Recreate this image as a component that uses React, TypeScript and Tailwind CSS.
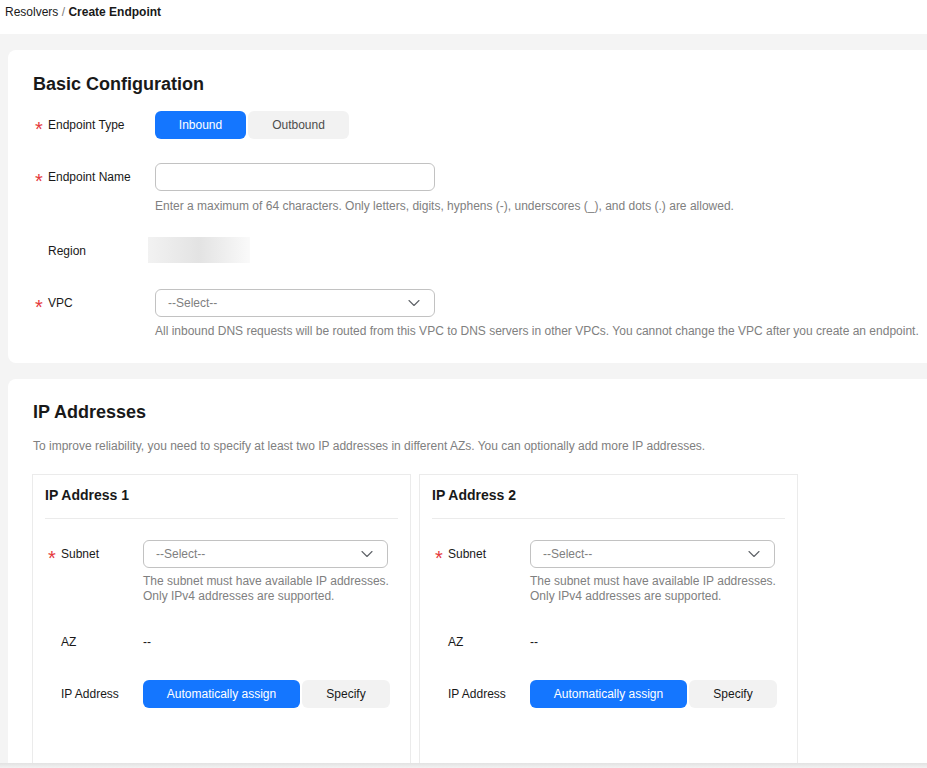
import React from "react";

const Chevron = () => (
  <svg width="12" height="8" viewBox="0 0 12 8" fill="none">
    <path d="M1 1.5l5 5 5-5" stroke="#5f6368" strokeWidth="1.1" strokeLinecap="round" strokeLinejoin="round" />
  </svg>
);

const Star = () => (
  <span className="text-[#e5393d] text-[20px] leading-none inline-block translate-y-[4px]">*</span>
);

const Select = ({ w }: { w: string }) => (
  <div className={`${w} h-[28px] border border-[#c2c2c2] rounded-[6px] flex items-center justify-between pl-[12px] pr-[14px] text-[12px] text-[#808080]`}>
    <span>--Select--</span>
    <Chevron />
  </div>
);

function IpCard({ n }: { n: number }) {
  return (
    <div className="w-[379px] h-[289px] border border-[#ebebeb] border-b-0 px-[12px]">
      <div className="h-[44px] flex items-center pb-[3px] text-[14px] font-bold text-[#191919] border-b border-[#ebebeb]">
        IP Address {n}
      </div>
      <div className="pl-[3px]">
        <div className="flex mt-[21px]">
          <div className="w-[95px] h-[28px] flex items-center text-[12px] text-[#191919]">
            <span className="w-[13px] flex"><Star /></span>Subnet
          </div>
          <div>
            <Select w="w-[245px]" />
            <div className="mt-[6px] text-[12px] leading-[15px] text-[#808080]">
              The subnet must have available IP addresses.
              <br />
              Only IPv4 addresses are supported.
            </div>
          </div>
        </div>
        <div className="flex mt-[24px] h-[28px] items-center text-[12px] text-[#191919]">
          <div className="w-[95px] pl-[13px]">AZ</div>
          <div>--</div>
        </div>
        <div className="flex mt-[24px] h-[28px] items-center text-[12px] text-[#191919]">
          <div className="w-[95px] pl-[13px]">IP Address</div>
          <div className="flex gap-[2px]">
            <div className="w-[157px] h-[28px] rounded-[6px] bg-[#1476ff] text-white flex items-center justify-center">Automatically assign</div>
            <div className="w-[88px] h-[28px] rounded-[6px] bg-[#f2f2f2] text-[#191919] flex items-center justify-center">Specify</div>
          </div>
        </div>
      </div>
    </div>
  );
}

export default function App() {
  return (
    <div className="w-[927px] h-[768px] overflow-hidden bg-white text-[#191919]" style={{ fontFamily: '"Liberation Sans", Arial, sans-serif' }}>
      <div className="h-[34px] pl-[5px] pt-[4px] text-[12px] leading-[16px]">
        <span className="text-[#191919]">Resolvers</span>
        <span className="text-[#808080]"> / </span>
        <span className="font-bold text-[#191919]">Create Endpoint</span>
      </div>
      <div className="bg-[#f4f4f4] pt-[16px] pl-[8px] h-[734px] flex flex-col">
        <div className="w-[940px] h-[313px] bg-white rounded-[8px] pl-[24px] pt-[22px]">
          <div className="text-[18px] leading-[24px] font-bold pl-[1px]">Basic Configuration</div>
          <div className="flex mt-[15px]">
            <div className="w-[123px] h-[28px] flex items-center text-[12px]">
              <span className="w-[16px] pl-[3px] flex"><Star /></span>Endpoint Type
            </div>
            <div className="flex gap-[2px] text-[12px]">
              <div className="w-[91px] h-[28px] rounded-[6px] bg-[#1476ff] text-white flex items-center justify-center">Inbound</div>
              <div className="w-[101px] h-[28px] rounded-[6px] bg-[#f2f2f2] text-[#4d4d4d] flex items-center justify-center">Outbound</div>
            </div>
          </div>
          <div className="flex mt-[24px]">
            <div className="w-[123px] h-[28px] flex items-center text-[12px]">
              <span className="w-[16px] pl-[3px] flex"><Star /></span>Endpoint Name
            </div>
            <div>
              <div className="w-[280px] h-[28px] border border-[#c2c2c2] rounded-[6px]" />
              <div className="mt-[7px] text-[12px] leading-[16px] text-[#808080]">
                Enter a maximum of 64 characters. Only letters, digits, hyphens (-), underscores (_), and dots (.) are allowed.
              </div>
            </div>
          </div>
          <div className="flex mt-[23px] items-center">
            <div className="w-[116px] h-[26px] flex items-center text-[12px] pl-[16px] pt-[2px]">Region</div>
            <div className="w-[102px] h-[26px] overflow-hidden">
              <div className="w-full h-full bg-gradient-to-r from-[#f2f2f2] via-[#e3e3e3] to-[#fafafa]" />
            </div>
          </div>
          <div className="flex mt-[26px]">
            <div className="w-[123px] h-[28px] flex items-center text-[12px]">
              <span className="w-[16px] pl-[3px] flex"><Star /></span>VPC
            </div>
            <div>
              <Select w="w-[280px]" />
              <div className="mt-[6px] text-[12px] leading-[16px] text-[#808080] whitespace-nowrap">
                All inbound DNS requests will be routed from this VPC to DNS servers in other VPCs. You cannot change the VPC after you create an endpoint.
              </div>
            </div>
          </div>
        </div>
        <div className="w-[940px] h-[384px] mt-[16px] bg-white rounded-t-[8px] pl-[24px] pt-[21px] shrink-0">
          <div className="text-[18px] leading-[24px] font-bold pl-[1px]">IP Addresses</div>
          <div className="mt-[14px] text-[12px] leading-[16px] text-[#808080] pl-[1px]">
            To improve reliability, you need to specify at least two IP addresses in different AZs. You can optionally add more IP addresses.
          </div>
          <div className="flex gap-[8px] mt-[20px]">
            <IpCard n={1} />
            <IpCard n={2} />
          </div>
        </div>
        <div className="h-[5px] bg-gradient-to-b from-[#e2e2e2] to-[#f2f2f2] shrink-0 -ml-[8px]" />
      </div>
    </div>
  );
}
